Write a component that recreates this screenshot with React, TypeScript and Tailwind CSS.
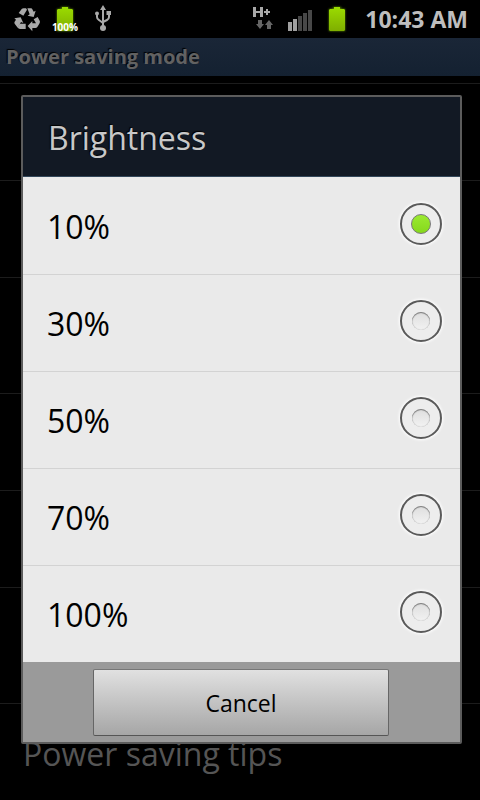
import { useState } from "react";

const LEVELS = ["10%", "30%", "50%", "70%", "100%"];

const ROWS = [
  { height: "h-[97px]", label: "" },
  { height: "h-[97px]", label: "" },
  { height: "h-[116px]", label: "" },
  { height: "h-[97px]", label: "" },
  { height: "h-[97px]", label: "" },
  { height: "h-[116px]", label: "" },
  { height: "h-[97px]", label: "Power saving tips" },
];

function RecycleIcon() {
  return (
    <svg width="26" height="24" viewBox="0 0 78 72" className="block" fill="#a9a9a9">
      <path d="M14 15L23 3Q25 1 29 1H36L39 5L28 23Z" />
      <path d="M40 1H51Q54 1 55 4L59 11L65 8L59 27L41 23L47 19Z" />
      <path d="M59 34L71 27L77 38Q79 42 76 47L70 57Q68 60 64 60H55V70L41 54L55 39V46H66Z" />
      <path d="M17 47H35V63H18Q13 63 11 58Z" />
      <path d="M1 31L20 28L28 45L21 42L11 59L2 47Q0 44 2 41L6 35Z" />
    </svg>
  );
}

function Battery() {
  return (
    <svg width="28" height="32" viewBox="0 0 28 32" className="block overflow-visible">
      <defs>
        <linearGradient id="charge" x1="0" y1="0" x2="0" y2="1">
          <stop offset="0" stopColor="#9bdc00" />
          <stop offset="1" stopColor="#7fae00" />
        </linearGradient>
        <filter id="glow" x="-30%" y="-30%" width="160%" height="160%">
          <feGaussianBlur stdDeviation="1.2" />
        </filter>
      </defs>
      <path d="M6 6h4V4h8v2h4v22H6z" fill="#5f9000" filter="url(#glow)" />
      <path d="M7 6h4V4h6v2h4l1 1v20l-1 1H7l-1-1V7z" fill="url(#charge)" />
    </svg>
  );
}

function UsbIcon() {
  return (
    <svg width="18" height="27" viewBox="0 0 18 27" className="block" fill="none" stroke="#a9a9a9" strokeWidth="2">
      <path d="M9 4v19M3 9v3q0 2 2 3l4 3M15 8v4q0 2-2 3l-4 2" />
      <path d="M9 0l3 5H6zM12.500 6h4.500v4h-4.500z" fill="#a9a9a9" stroke="none" />
      <circle cx="3" cy="8.500" r="2" fill="#a9a9a9" stroke="none" />
      <circle cx="9" cy="23" r="3" fill="#a9a9a9" stroke="none" />
    </svg>
  );
}

function DataIcon() {
  return (
    <svg width="22" height="24" viewBox="0 0 22 24" className="block">
      <path d="M1 1h3v4h4V1h3v10H8V7H4v4H1zM14 3h2v2h2v2h-2v2h-2V7h-2V5h2z" fill="#a8a8a8" />
      <path d="M6 14h4v4h2l-4 5-4-5h2zM15 23h4v-4h2l-4-5-4 5h2z" fill="#666" />
    </svg>
  );
}

function SignalIcon() {
  return (
    <svg width="24" height="22" viewBox="0 0 24 22" className="block">
      <path d="M0 13h4v9H0zM5 10h4v12H5z" fill="#a0a0a0" />
      <path d="M10 7h4v15h-4zM15 4h4v18h-4zM20 1h4v21h-4z" fill="#484848" />
    </svg>
  );
}

function StatusBar() {
  return (
    <header className="flex h-[38px] items-center justify-between bg-black pr-3 pl-[14px]">
      <div className="flex items-center">
        <div className="pt-[2px]">
          <RecycleIcon />
        </div>
        <div className="relative ml-[11px]">
          <Battery />
          <span className="absolute inset-x-0 bottom-[2px] text-center text-[10px] leading-3 font-bold text-white">
            100%
          </span>
        </div>
        <div className="ml-[15px] pb-px">
          <UsbIcon />
        </div>
      </div>
      <div className="flex items-center">
        <div className="pb-[2px]">
          <DataIcon />
        </div>
        <div className="ml-[14px] pt-px">
          <SignalIcon />
        </div>
        <div className="mr-[14px] ml-[11px]">
          <Battery />
        </div>
        <time className="text-[23px] leading-8 font-bold text-[#bebebe]">10:43 AM</time>
      </div>
    </header>
  );
}

function BrightnessDialog() {
  const [level, setLevel] = useState("10%");

  return (
    <form
      role="dialog"
      aria-labelledby="dialog-title"
      className="w-full rounded-[2px] border-2 border-[#5c5c5c] bg-[#eaeaea]"
    >
      <h2
        id="dialog-title"
        className="h-20 border-b border-[#33475a] bg-[#121924] pl-[25px] text-[32px] leading-[82px] text-[#c8c8c8] [text-shadow:-1px_-1px_1px_#000]"
      >
        Brightness
      </h2>
      <div role="radiogroup" aria-labelledby="dialog-title" className="divide-y divide-[#d3d3d3] pt-px">
        {LEVELS.map((value) => (
          <label
            key={value}
            className="flex h-[97px] items-center justify-between pr-[18px] pb-1 pl-6 last:h-24"
          >
            <span className="pt-[6px] text-[32px] leading-10 text-black">{value}</span>
            <span className="grid place-items-center">
              <input
                type="radio"
                name="brightness"
                value={value}
                checked={level === value}
                onChange={() => setLevel(value)}
                className="peer col-start-1 row-start-1 size-[42px] appearance-none rounded-full border-2 border-[#5a5a5a] bg-[#ededed] shadow-[0_0_3px_1px_#fff]"
              />
              <span className="pointer-events-none col-start-1 row-start-1 size-[18px] rounded-full bg-linear-to-b from-[#dedede] to-[#f2f2f2] shadow-[inset_0_1px_1px_#777,inset_0_0_1px_#aaa] peer-checked:size-5 peer-checked:border peer-checked:border-[#777] peer-checked:from-[#9bea30] peer-checked:to-[#86d81c] peer-checked:shadow-none" />
            </span>
          </label>
        ))}
      </div>
      <div className="bg-[#9a9a9a] pt-[7px] pr-[71px] pb-[6px] pl-[70px]">
        <button
          type="button"
          className="h-[67px] w-full rounded-[2px] border border-t-[#777] border-r-[#666] border-b-[#555] border-l-[#666] bg-linear-to-b from-[#e1e1e1] to-[#a6a6a6] pt-[2px] text-[23px] text-black"
        >
          Cancel
        </button>
      </div>
    </form>
  );
}

export default function App() {
  return (
    <div className="relative h-screen overflow-hidden bg-black font-['Open_Sans','Noto_Sans',sans-serif]">
      <StatusBar />
      <h1 className="h-[38px] bg-linear-to-b from-[#1a2637] to-[#142131] pl-[6px] text-[20px] leading-[38px] font-bold text-[#626262] [text-shadow:-1px_-1px_1px_#000]">
        Power saving mode
      </h1>
      <ul className="pt-[7px]">
        {ROWS.map((row, i) => (
          <li
            key={i}
            className={`${row.height} flex items-center border-t border-[#1c1c1c] pt-[3px] pl-[23px] text-[32px] leading-10 text-[#555]`}
          >
            {row.label}
          </li>
        ))}
      </ul>
      <div className="absolute inset-x-0 top-[95px] pr-[18px] pl-[21px]">
        <BrightnessDialog />
      </div>
    </div>
  );
}
